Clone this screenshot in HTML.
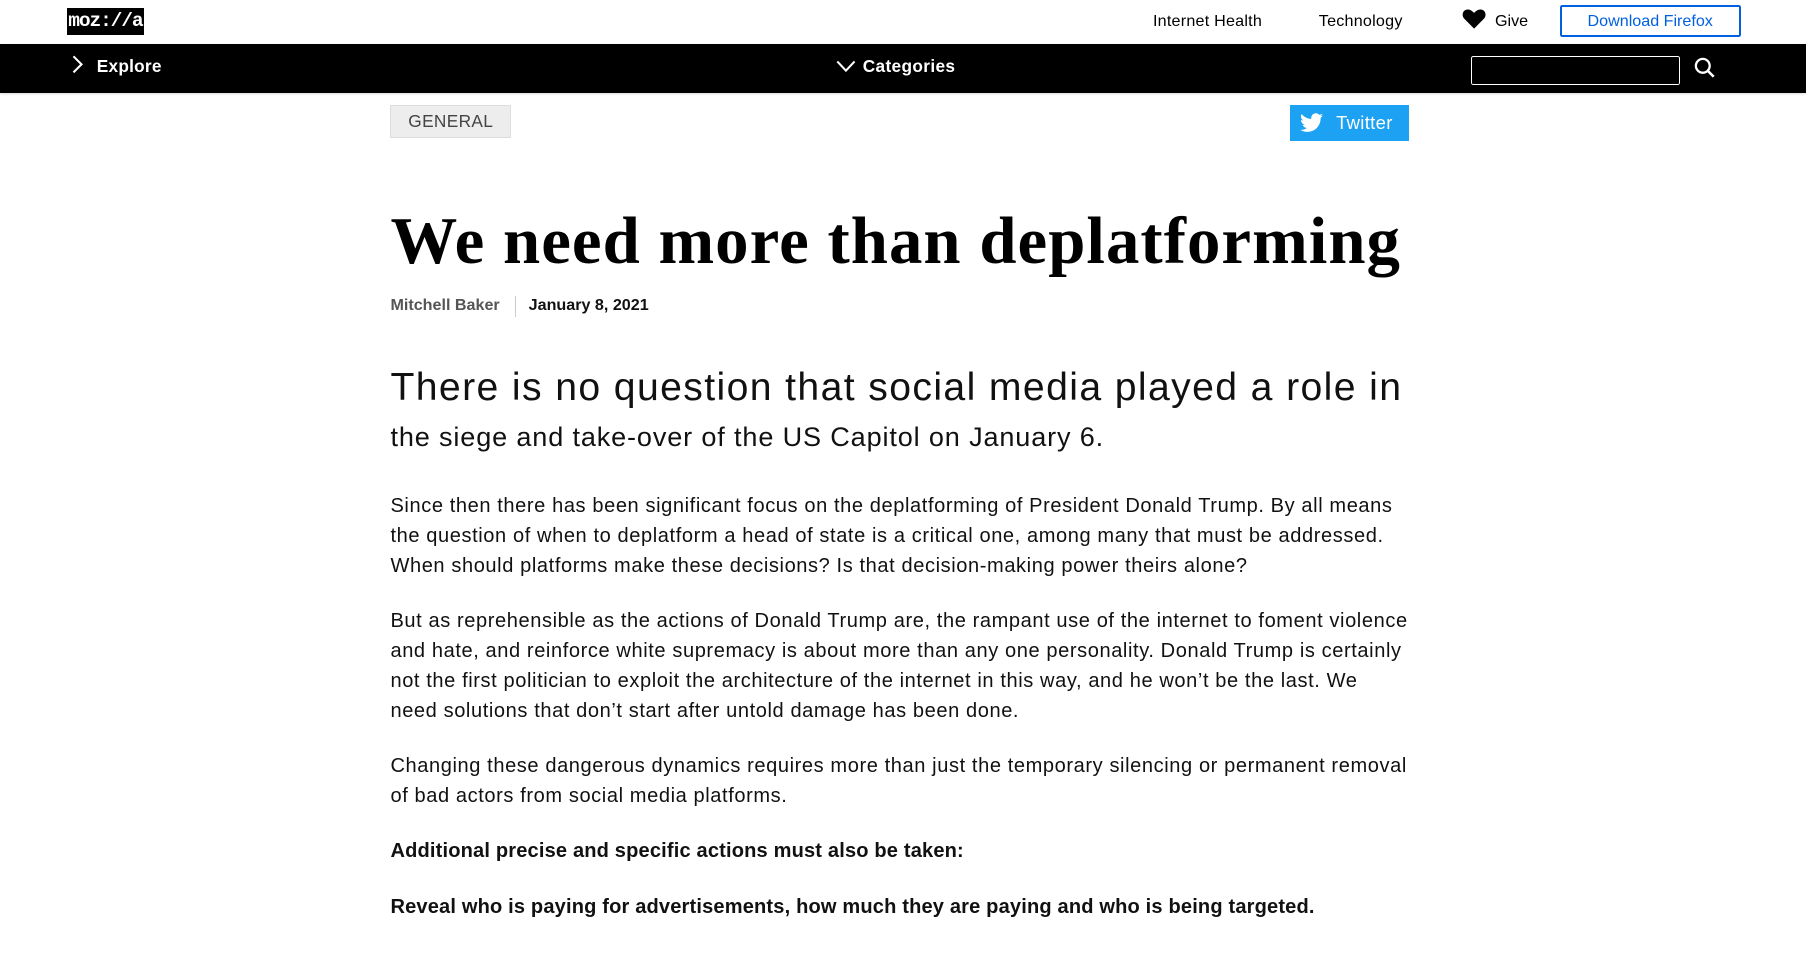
<!DOCTYPE html>
<html><head><meta charset="utf-8"><style>
html,body{margin:0;padding:0;background:#fff;overflow:hidden}
body{width:1568px;height:827px;zoom:1.15179;position:relative;font-family:"Liberation Sans",Arial,sans-serif;color:#000}
.a{position:absolute;white-space:nowrap}
.top{font-size:14px;top:10px}
.nav{position:absolute;left:0;top:38px;width:1568px;height:43px;background:#000;box-shadow:0 1px 2px rgba(0,0,0,.15)}
p.b{position:absolute;left:339px;margin:0;font-size:17.4px;line-height:26px;letter-spacing:.52px;white-space:nowrap;color:#111}
</style></head><body>
<div class="a" style="left:58px;top:7px;width:67px;height:23px;background:#000;color:#fff;font-family:'Liberation Mono',monospace;font-weight:bold;font-size:17px;line-height:23px;text-align:center;letter-spacing:-1px">moz://a</div>
<div class="a top" style="left:1001px;letter-spacing:.2px">Internet Health</div>
<div class="a top" style="left:1145px;letter-spacing:.2px">Technology</div>
<svg class="a" style="left:1269px;top:8px" width="21" height="17" viewBox="0 0 24 20"><path d="M12 20 L2 10 C-1 7 0 1 5 0.5 C8 0.2 10 2 12 4 C14 2 16 0.2 19 0.5 C24 1 25 7 22 10 Z" fill="#000"/></svg>
<div class="a top" style="left:1298px">Give</div>
<div class="a" style="left:1354px;top:4px;width:154px;height:25px;border:2px solid #0060df;border-radius:2px;color:#0060df;font-size:14px;line-height:25px;text-align:center">Download Firefox</div>
<div class="nav"></div>
<svg class="a" style="left:61px;top:47px" width="12" height="18" viewBox="0 0 12 18"><path d="M3 2 L10 9 L3 16" fill="none" stroke="#fff" stroke-width="1.8"/></svg>
<div class="a" style="left:84px;top:49px;color:#fff;font-weight:bold;font-size:15px;letter-spacing:.2px">Explore</div>
<svg class="a" style="left:725px;top:50px" width="19" height="14" viewBox="0 0 19 14"><path d="M2 3 L9.5 11 L17 3" fill="none" stroke="#fff" stroke-width="1.8"/></svg>
<div class="a" style="left:749px;top:49px;color:#fff;font-weight:bold;font-size:15px;letter-spacing:.3px">Categories</div>
<div class="a" style="left:1277px;top:49px;width:180px;height:23px;border:1px solid #fff;border-radius:2px"></div>
<svg class="a" style="left:1470px;top:49px" width="20" height="20" viewBox="0 0 20 20"><circle cx="8.5" cy="8.5" r="6" fill="none" stroke="#fff" stroke-width="2"/><path d="M13 13 L18 18" stroke="#fff" stroke-width="2.2"/></svg>
<div class="a" style="left:339px;top:91px;width:103px;height:27px;background:#ededed;border:1px solid #ddd;color:#444;font-size:15px;line-height:27px;text-align:center;letter-spacing:.3px">GENERAL</div>
<div class="a" style="left:1120px;top:91px;width:103px;height:31px;background:#1da1f2;color:#fff;font-size:16px;line-height:31px"><svg style="position:absolute;left:9px;top:7px" width="20" height="17" viewBox="0 0 24 20"><path d="M24 2.4c-.9.4-1.8.7-2.8.8 1-.6 1.8-1.6 2.2-2.7-1 .6-2 1-3.1 1.2C19.3.7 18 0 16.6 0c-2.7 0-4.9 2.2-4.9 4.9 0 .4 0 .8.1 1.1C7.7 5.8 4.1 3.9 1.7.9c-.4.7-.7 1.6-.7 2.5 0 1.700.9 3.2 2.2 4.1-.8 0-1.6-.2-2.2-.6v.1c0 2.4 1.7 4.4 3.9 4.8-.4.1-.8.2-1.3.2-.3 0-.6 0-.9-.1.6 2 2.4 3.4 4.6 3.4-1.7 1.3-3.8 2.1-6.1 2.1-.4 0-.8 0-1.2-.1 2.2 1.4 4.8 2.2 7.5 2.2 9.1 0 14-7.5 14-14v-.6c1-.7 1.8-1.6 2.5-2.5z" fill="#fff"/></svg><span style="position:absolute;left:40px;letter-spacing:.3px">Twitter</span></div>
<div class="a" style="left:339px;top:176px;font-family:'Liberation Serif',serif;font-weight:bold;font-size:58px;letter-spacing:.9px;line-height:66px">We need more than deplatforming</div>
<div class="a" style="left:339px;top:257px;font-size:14px;font-weight:bold;color:#555">Mitchell Baker</div>
<div class="a" style="left:447px;top:257px;width:1px;height:18px;background:#ccc"></div>
<div class="a" style="left:459px;top:257px;font-size:14px;font-weight:bold;color:#111">January 8, 2021</div>
<div class="a" style="left:339px;top:315px;font-size:34px;line-height:44px;color:#111;letter-spacing:1.2px">There is no question that social media played a role in</div>
<div class="a" style="left:339px;top:365px;font-size:23.5px;line-height:30px;color:#111;letter-spacing:.75px">the siege and take-over of the US Capitol on January 6.</div>
<p class="b" style="top:427px">Since then there has been significant focus on the deplatforming of President Donald Trump. By all means<br>the question of when to deplatform a head of state is a critical one, among many that must be addressed.<br>When should platforms make these decisions? Is that decision-making power theirs alone?</p>
<p class="b" style="top:527px">But as reprehensible as the actions of Donald Trump are, the rampant use of the internet to foment violence<br>and hate, and reinforce white supremacy is about more than any one personality. Donald Trump is certainly<br>not the first politician to exploit the architecture of the internet in this way, and he won’t be the last. We<br>need solutions that don’t start after untold damage has been done.</p>
<p class="b" style="top:653px">Changing these dangerous dynamics requires more than just the temporary silencing or permanent removal<br>of bad actors from social media platforms.</p>
<p class="b" style="top:727px;font-weight:bold;letter-spacing:.15px">Additional precise and specific actions must also be taken:</p>
<p class="b" style="top:775px;font-weight:bold;letter-spacing:.15px">Reveal who is paying for advertisements, how much they are paying and who is being targeted.</p>
<p class="b" style="top:823px">Commercial advertising allows anyone to buy their way into someone’s social media feed, with little to no</p>
</body></html>
